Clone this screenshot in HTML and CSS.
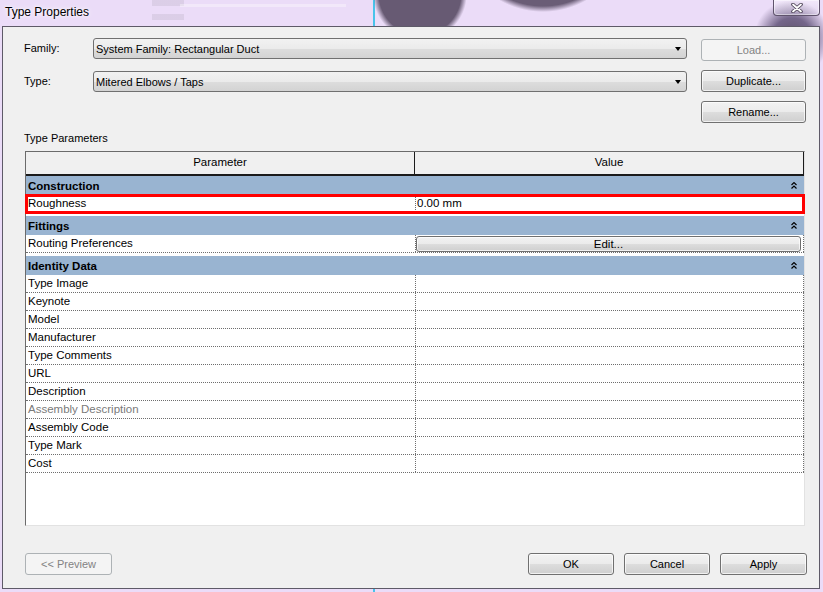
FILE: index.html
```html
<!DOCTYPE html>
<html lang="en">
<head>
    <meta charset="UTF-8">
    <title>Type Properties</title>
    <link rel="stylesheet" href="styles.css">
</head>
<body>
    <div class="window">
        <div class="titlebar">
            <span class="title">Type Properties</span>
            <button class="close-btn" title="Close">
                <svg width="14" height="10" viewBox="0 0 14 10">
                    <path d="M3 1.5 L11 8.5 M11 1.5 L3 8.5" stroke="#4c4256" stroke-width="3.6" stroke-linecap="round"/>
                    <path d="M3 1.5 L11 8.5 M11 1.5 L3 8.5" stroke="#fff" stroke-width="1.8" stroke-linecap="round"/>
                </svg>
            </button>
        </div>

        <div class="dialog">
            <div class="type-select">
                <label class="field-label first">Family:</label>
                <div class="combo first">
                    <span>System Family: Rectangular Duct</span>
                    <span class="combo-arrow"></span>
                </div>
                <button class="btn side-btn" disabled>Load...</button>

                <label class="field-label second">Type:</label>
                <div class="combo second">
                    <span>Mitered Elbows / Taps</span>
                    <span class="combo-arrow"></span>
                </div>
                <button class="btn side-btn">Duplicate...</button>

                <button class="btn side-btn rename-btn">Rename...</button>
            </div>

            <div class="section-label">Type Parameters</div>

            <div class="param-grid">
                <div class="grid-head">
                    <div class="head-cell">Parameter</div>
                    <div class="head-cell">Value</div>
                </div>

                <div class="group">
                    <span>Construction</span>
                    <svg class="collapse" width="6" height="7" viewBox="0 0 6 7"><path d="M0.5 3 L3 0.6 L5.5 3 M0.5 6.5 L3 4.1 L5.5 6.5" fill="none" stroke="#000" stroke-width="1.2"/></svg>
                </div>
                <div class="row flagged">
                    <div class="cell">Roughness</div>
                    <div class="cell value">0.00 mm</div>
                </div>

                <div class="group">
                    <span>Fittings</span>
                    <svg class="collapse" width="6" height="7" viewBox="0 0 6 7"><path d="M0.5 3 L3 0.6 L5.5 3 M0.5 6.5 L3 4.1 L5.5 6.5" fill="none" stroke="#000" stroke-width="1.2"/></svg>
                </div>
                <div class="row">
                    <div class="cell">Routing Preferences</div>
                    <div class="cell value has-btn"><button class="btn cell-btn">Edit...</button></div>
                </div>

                <div class="group">
                    <span>Identity Data</span>
                    <svg class="collapse" width="6" height="7" viewBox="0 0 6 7"><path d="M0.5 3 L3 0.6 L5.5 3 M0.5 6.5 L3 4.1 L5.5 6.5" fill="none" stroke="#000" stroke-width="1.2"/></svg>
                </div>
                <div class="row"><div class="cell">Type Image</div><div class="cell value"></div></div>
                <div class="row"><div class="cell">Keynote</div><div class="cell value"></div></div>
                <div class="row"><div class="cell">Model</div><div class="cell value"></div></div>
                <div class="row"><div class="cell">Manufacturer</div><div class="cell value"></div></div>
                <div class="row"><div class="cell">Type Comments</div><div class="cell value"></div></div>
                <div class="row"><div class="cell">URL</div><div class="cell value"></div></div>
                <div class="row"><div class="cell">Description</div><div class="cell value"></div></div>
                <div class="row"><div class="cell muted">Assembly Description</div><div class="cell value"></div></div>
                <div class="row"><div class="cell">Assembly Code</div><div class="cell value"></div></div>
                <div class="row"><div class="cell">Type Mark</div><div class="cell value"></div></div>
                <div class="row"><div class="cell">Cost</div><div class="cell value"></div></div>
            </div>

            <div class="footer">
                <button class="btn preview-btn" disabled>&lt;&lt; Preview</button>
                <div class="footer-actions">
                    <button class="btn">OK</button>
                    <button class="btn">Cancel</button>
                    <button class="btn apply-btn">Apply</button>
                </div>
            </div>
        </div>
    </div>
</body>
</html>
```

FILE: styles.css
```css
body {
    margin: 0;
    font-family: "Liberation Sans", Arial, sans-serif;
    color: #000;
}

/* glass frame with the blurred desktop showing through */
.window {
    width: 823px;
    height: 592px;
    overflow: hidden;
    background:
        radial-gradient(circle 47px at 420px -6px, #675a73 0, #675a73 41px, rgba(103, 90, 115, 0) 47px),
        radial-gradient(circle 88px at 543px -76px, #6a5d76 0, #6a5d76 82px, rgba(106, 93, 118, 0) 88px),
        radial-gradient(circle 38px at 792px 38px, #5d5068 0, #74668a 20px, rgba(116, 102, 138, 0) 38px),
        linear-gradient(to right, transparent 373px, #49c3ea 373px, #49c3ea 375px, transparent 375px),
        linear-gradient(to bottom, transparent 4px, rgba(255, 255, 255, 0.35) 4px, rgba(255, 255, 255, 0.35) 7px, transparent 7px) 180px 0 / 166px 26px no-repeat,
        linear-gradient(to bottom, rgba(190, 180, 200, 0.35) 0, rgba(190, 180, 200, 0.35) 6px, transparent 6px, transparent 14px, rgba(190, 180, 200, 0.35) 14px, rgba(190, 180, 200, 0.35) 20px, transparent 20px) 152px 0 / 32px 26px no-repeat,
        #ebdcf8;
}

.titlebar {
    height: 26px;
    display: flex;
    justify-content: space-between;
    align-items: flex-start;
    padding: 0 3px 0 5px;
    box-sizing: border-box;
}

.title {
    font-size: 12px;
    line-height: 15px;
    padding-top: 5px;
    text-shadow: 0 0 6px #fff, 0 0 3px #fff;
}

.close-btn {
    width: 47px;
    height: 16px;
    padding: 0;
    border: 1px solid #5f536c;
    border-top: none;
    border-radius: 0 0 4px 4px;
    background: linear-gradient(to bottom, rgba(255, 255, 255, 0.35), rgba(210, 200, 225, 0.35));
    box-shadow: inset 0 0 0 1px rgba(255, 255, 255, 0.45);
    display: flex;
    justify-content: center;
    align-items: center;
}

.dialog {
    margin-left: 2px;
    width: 818px;
    height: 563px;
    box-sizing: border-box;
    border: 1px solid #5e5a68;
    background-color: #f0f0f0;
    padding: 12px 12px 13px 21px;
    display: flex;
    flex-direction: column;
    font-size: 11px;
}

.type-select {
    display: grid;
    grid-template-columns: 69px 594px 119px;
    grid-template-rows: 22px 22px 22px;
    row-gap: 9px;
    align-items: start;
}

.field-label {
    line-height: 21px;
}

/* the combos sit a pixel off the button rows */
.first {
    margin-top: -1px;
}

.second {
    margin-top: 1px;
}

.combo {
    height: 21px;
    box-sizing: border-box;
    border: 1px solid #707070;
    border-radius: 3px;
    background: linear-gradient(to bottom, #f2f2f2 0%, #ebebeb 50%, #dddddd 51%, #d3d3d3 100%);
    display: flex;
    justify-content: space-between;
    align-items: center;
    padding: 0 5px 0 2px;
}

.combo-arrow {
    width: 0;
    height: 0;
    border-left: 3.5px solid transparent;
    border-right: 3.5px solid transparent;
    border-top: 4px solid #000;
}

.btn {
    height: 22px;
    box-sizing: border-box;
    border: 1px solid #707070;
    border-radius: 3px;
    background: linear-gradient(to bottom, #f2f2f2 0%, #ebebeb 50%, #dddddd 51%, #cfcfcf 100%);
    box-shadow: inset 0 0 0 1px rgba(255, 255, 255, 0.7);
    font-family: "Liberation Sans", Arial, sans-serif;
    font-size: 11px;
    color: #000;
    padding: 0;
}

.btn:disabled {
    border-color: #adb2b5;
    background: #f4f4f4;
    box-shadow: none;
    color: #838383;
}

.side-btn {
    width: 105px;
    justify-self: end;
}

.rename-btn {
    grid-column: 3;
}

.section-label {
    margin-top: 8px;
    line-height: 14px;
}

.param-grid {
    flex: 1;
    margin: 6px 0 0 1px;
    width: 780px;
    box-sizing: border-box;
    border: 1px solid;
    border-color: #6b6b6b #e2e2e2 #e2e2e2 #6b6b6b;
    background-color: #fff;
    font-size: 11.5px;
}

.grid-head {
    display: grid;
    grid-template-columns: 389px 1fr;
    height: 24px;
    box-sizing: border-box;
    border-bottom: 2px solid #1b1b1b;
}

.head-cell {
    background-color: #f0f0f0;
    border-right: 1px solid #1b1b1b;
    text-align: center;
    line-height: 21px;
}

.group {
    height: 19px;
    background-color: #99b4d1;
    font-weight: bold;
    display: flex;
    justify-content: space-between;
    align-items: center;
    padding: 0 7px 0 2px;
}

.row + .group {
    margin-top: 3px;
}

.row {
    display: grid;
    grid-template-columns: 389px 1fr;
    height: 18px;
    box-sizing: border-box;
    border-bottom: 1px dotted #6e6e6e;
    line-height: 17px;
}

.cell {
    padding-left: 2px;
    white-space: nowrap;
}

.cell.value {
    border-left: 1px dotted #6e6e6e;
    border-right: 1px dotted #6e6e6e;
    padding-left: 1px;
}

.cell.muted {
    color: #7a7a7a;
}

.cell.has-btn {
    padding: 1px 2px 0 0;
}

.cell-btn {
    display: block;
    width: 100%;
    height: 16px;
    font-size: 11.5px;
    line-height: 14px;
}

.row.flagged {
    outline: 3px solid #f00;
    outline-offset: -2px;
}

.footer {
    margin-top: 27px;
    display: flex;
    justify-content: space-between;
}

.preview-btn {
    width: 87px;
    margin-left: 1px;
}

.footer-actions {
    display: flex;
    gap: 10px;
}

.footer-actions .btn {
    width: 86px;
}

.footer-actions .apply-btn {
    width: 87px;
}
```
